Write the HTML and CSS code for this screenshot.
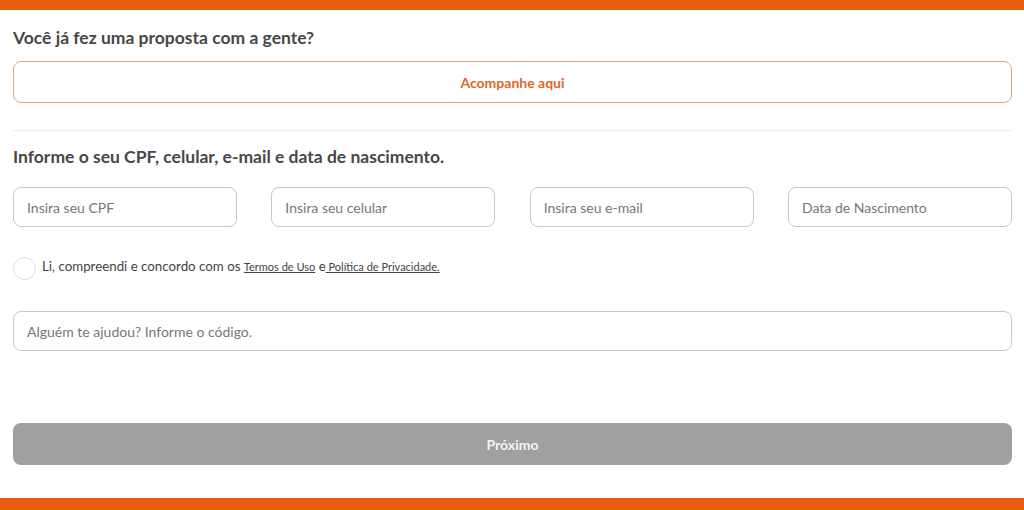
FILE: index.html
```html
<!DOCTYPE html>
<html lang="pt-BR">
<head>
<meta charset="utf-8">
<link rel="stylesheet" href="styles.css">
</head>
<body>
<div class="bar"></div>
<main class="content">
  <h2 class="title t1">Você já fez uma proposta com a gente?</h2>
  <button class="track">Acompanhe aqui</button>
  <hr class="divider">
  <h2 class="title t2">Informe o seu CPF, celular, e-mail e data de nascimento.</h2>
  <div class="fields">
    <input class="field" placeholder="Insira seu CPF">
    <input class="field" placeholder="Insira seu celular">
    <input class="field" placeholder="Insira seu e-mail">
    <input class="field" placeholder="Data de Nascimento">
  </div>
  <label class="agree">
    <span class="radio"></span>
    <span class="agree-text">Li, compreendi e concordo com os <a href="#">Termos de Uso</a> e<a href="#"> Política de Privacidade.</a></span>
  </label>
  <input class="field wide" placeholder="Alguém te ajudou? Informe o código.">
  <button class="next">Próximo</button>
</main>
<div class="bar bottom"></div>
</body>
</html>
```
FILE: styles.css
```css
* { box-sizing: border-box; }
html, body { margin: 0; padding: 0; background: #fff; }
body {
  font-family: "Lato", "Open Sans", "Liberation Sans", sans-serif;
  color: #444;
  width: 1024px;
  height: 510px;
  display: flex;
  flex-direction: column;
  overflow: hidden;
}
.bar { height: 10px; background: #e95d0f; flex: none; }
.bar.bottom { height: 12px; margin-top: auto; }
.content {
  padding: 0 12px 0 13px;
  display: flex;
  flex-direction: column;
}
.title {
  margin: 0;
  font-size: 17.5px;
  line-height: 20px;
  font-weight: 700;
  color: #474747;
}
.t1 { margin-top: 18px; }
.track {
  margin-top: 13px;
  height: 42px;
  border: 1px solid #dfaa7e;
  border-radius: 8px;
  background: #fff;
  color: #e0672a;
  font-family: inherit;
  font-size: 14px;
  font-weight: 700;
}
.divider {
  margin: 27px 0 0;
  border: 0;
  border-top: 1px solid #eeeeee;
}
.t2 { margin-top: 16px; }
.fields {
  margin-top: 20px;
  display: grid;
  grid-template-columns: repeat(4, 224px);
  justify-content: space-between;
}
.field {
  height: 40px;
  border: 1px solid #c8c8c8;
  border-radius: 8px;
  padding: 0 13px;
  font-family: inherit;
  font-size: 14px;
  color: #444;
  background: #fff;
  outline: none;
}
.field::placeholder { color: #777; }
.agree {
  margin-top: 30px;
  display: flex;
  align-items: center;
  gap: 6px;
  height: 23px;
}
.radio {
  width: 23px;
  height: 23px;
  border: 1px solid #dcdcdc;
  border-radius: 50%;
  flex: none;
}
.agree-text {
  font-size: 13.3px;
  color: #444;
  margin-top: -5px;
}
.agree-text a {
  color: #444;
  font-size: 11px;
  text-decoration: underline;
}
.wide { margin-top: 31px; width: 100%; }
.next {
  margin-top: 72px;
  height: 42px;
  border: 0;
  border-radius: 8px;
  background: #a0a0a0;
  color: #f4f4f4;
  font-family: inherit;
  font-size: 14px;
  font-weight: 700;
}
```
